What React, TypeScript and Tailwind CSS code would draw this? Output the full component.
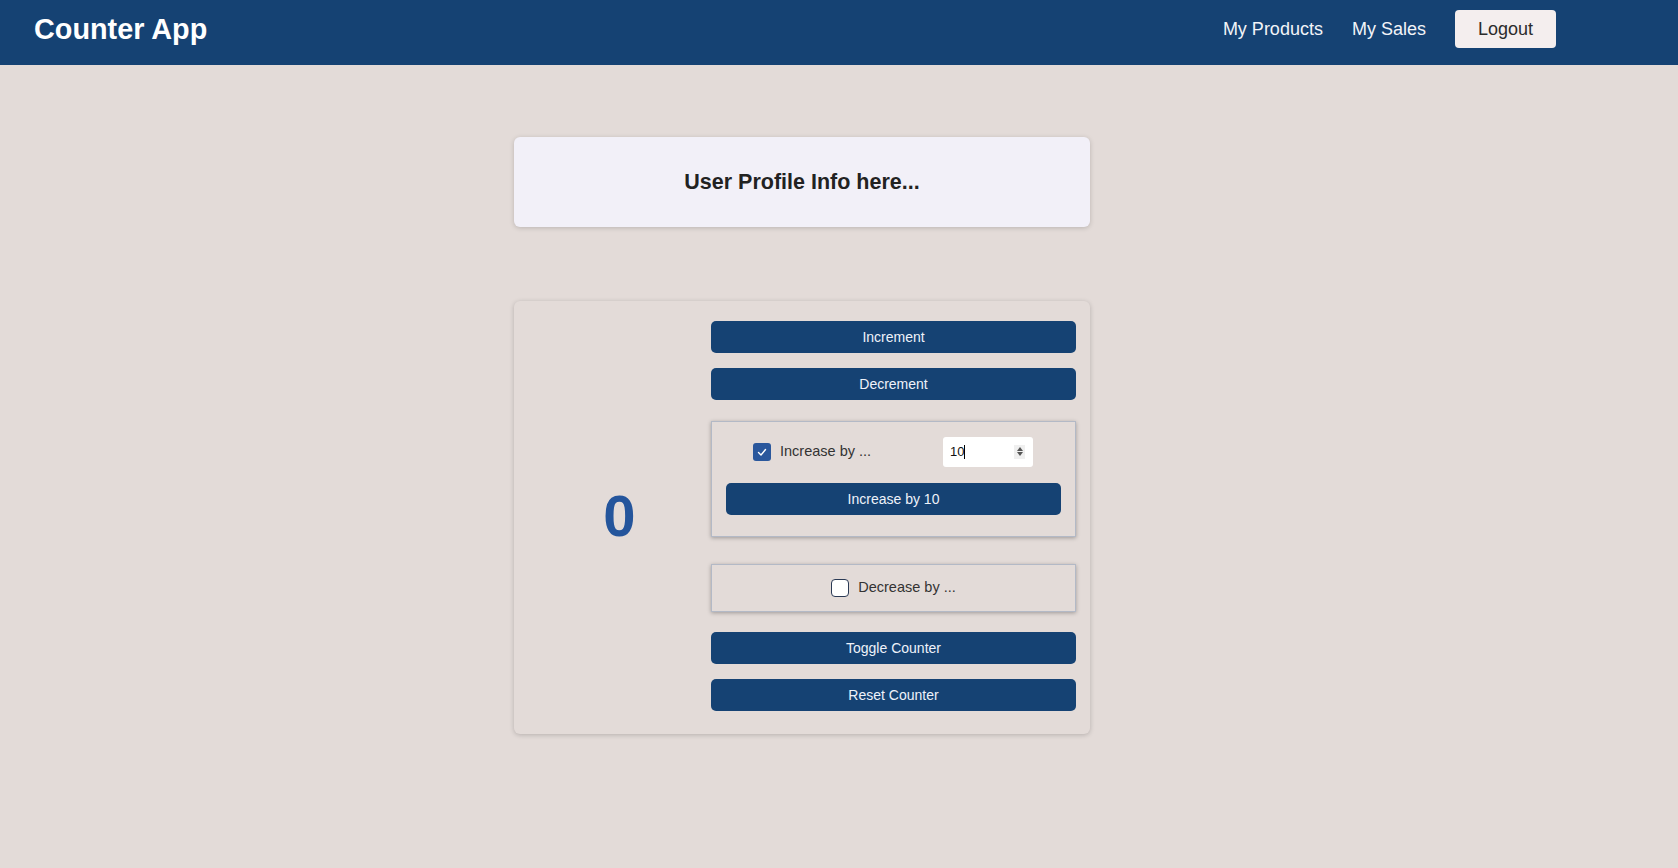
import React from "react";

function Check() {
  return (
    <svg width="12" height="12" viewBox="0 0 12 12" fill="none">
      <path d="M2.5 6.5 L5 9 L9.5 3.5" stroke="white" strokeWidth="1.4" strokeLinecap="round" strokeLinejoin="round" />
    </svg>
  );
}

const btn =
  "w-full h-[32px] rounded-[5px] bg-[#154273] text-[#eef2fa] text-[14px] flex items-center justify-center";

export default function App() {
  return (
    <div className="min-h-[868px] bg-[#e3dbd8] font-['Liberation_Sans',Arial,sans-serif]">
      <header className="h-[65px] bg-[#154273] flex items-center pb-[7px] pl-[34px] pr-[122px]">
        <h1 className="text-[28.8px] font-bold text-white leading-none">Counter App</h1>
        <nav className="ml-auto flex items-center">
          <a className="text-[18px] text-[#f2f4f8]">My Products</a>
          <a className="text-[18px] text-[#f2f4f8] ml-[29px]">My Sales</a>
          <button className="ml-[29px] h-[38px] px-[23px] rounded-[4px] bg-[#f4eeee] text-[18px] text-[#2b2b2b]">
            Logout
          </button>
        </nav>
      </header>

      <main className="pl-[514px] pt-[72px]">
        <div className="w-[576px] h-[90px] rounded-[6px] bg-[#f2f0f8] shadow-[0_1px_5px_rgba(0,0,0,0.18)] flex items-center justify-center">
          <h2 className="text-[21.5px] font-bold text-[#222]">User Profile Info here...</h2>
        </div>

        <div className="mt-[74px] w-[576px] rounded-[6px] bg-[#e3dbd8] shadow-[0_1px_5px_rgba(0,0,0,0.2)] flex pl-[14px] pr-[14px] pt-[20px] pb-[23px]">
          <div className="w-[183px] flex items-center justify-center">
            <span className="text-[58px] font-bold text-[#24559c] leading-none">0</span>
          </div>
          <div className="w-[365px] flex flex-col">
            <button className={btn}>Increment</button>
            <button className={btn + " mt-[15px]"}>Decrement</button>

            <div className="mt-[21px] border border-[#b3b9c6] shadow-[0_1px_4px_rgba(0,0,0,0.3)] pt-[15px] pb-[21px] px-[14px]">
              <div className="flex items-center h-[29px]">
                <div className="ml-[27px] w-[18px] h-[18px] rounded-[3px] bg-[#2a579c] flex items-center justify-center">
                  <Check />
                </div>
                <span className="ml-[9px] text-[14.5px] text-[#333]">Increase by ...</span>
                <div className="ml-auto mr-[28px] w-[90px] h-[30px] rounded-[3px] bg-white flex items-center pl-[7px] pr-[8px]">
                  <span className="text-[13px] text-[#111]">10</span>
                  <span className="w-[1px] h-[14px] bg-black" />
                  <div className="ml-auto w-[11px] h-[14px] bg-[#efefef] flex flex-col items-center justify-center gap-[1px]">
                    <svg width="6" height="4" viewBox="0 0 6 4"><path d="M0 4 L3 0 L6 4Z" fill="#555" /></svg>
                    <svg width="6" height="4" viewBox="0 0 6 4"><path d="M0 0 L3 4 L6 0Z" fill="#555" /></svg>
                  </div>
                </div>
              </div>
              <button className={btn + " mt-[17px]"}>Increase by 10</button>
            </div>

            <div className="mt-[27px] h-[48px] border border-[#b3b9c6] shadow-[0_1px_4px_rgba(0,0,0,0.3)] flex items-center justify-center">
              <div className="w-[18px] h-[18px] rounded-[4px] bg-white border border-[#2b3a55]" />
              <span className="ml-[9px] text-[14.5px] text-[#333]">Decrease by ...</span>
            </div>

            <button className={btn + " mt-[20px]"}>Toggle Counter</button>
            <button className={btn + " mt-[15px]"}>Reset Counter</button>
          </div>
        </div>
      </main>
    </div>
  );
}
